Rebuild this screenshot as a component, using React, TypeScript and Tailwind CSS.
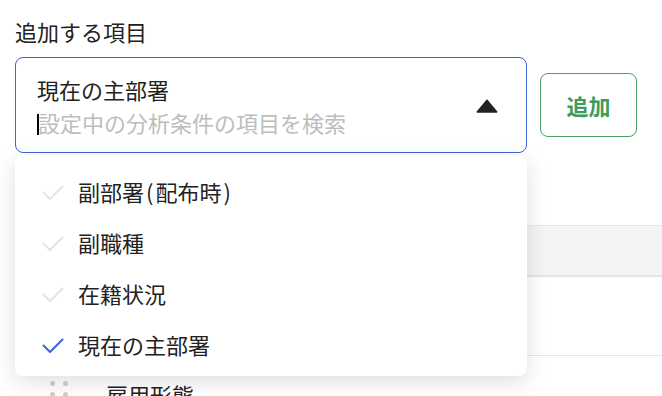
import { useState } from "react"

const options = ["副部署(配布時)", "副職種", "在籍状況", "現在の主部署"]

function CheckIcon({ active }: { active: boolean }) {
    return (
        <svg width="22" height="16" viewBox="0 0 22 16" fill="none" className="shrink-0">
            <polyline
                points="1.5,7.5 8,14 20.5,1.5"
                stroke={active ? "#3b63d6" : "#e3e3e8"}
                strokeWidth="2"
                strokeLinecap="round"
                strokeLinejoin="round"
            />
        </svg>
    )
}

function DragDots() {
    return (
        <div className="grid grid-cols-2 gap-x-[8px] gap-y-[6px] w-[18px] shrink-0">
            {[0, 1, 2, 3, 4, 5].map((i) => (
                <span key={i} className="size-[5px] rounded-full bg-[#cfcfcf]" />
            ))}
        </div>
    )
}

// half-width parens get a bit of room, like the reference font
function Label({ text }: { text: string }) {
    return (
        <span className="text-[22px] leading-[30px]">
            {text.split(/([()])/).map((part, i) =>
                part === "(" || part === ")" ? (
                    <span key={i} className="mx-[2px]">{part}</span>
                ) : (
                    part
                )
            )}
        </span>
    )
}

export default function App() {
    const [selected] = useState<string>("現在の主部署")

    return (
        <div
            className="w-[662px] h-[396px] overflow-hidden bg-white pl-[15px] pt-[16px] text-[#222]"
            style={{ fontFamily: '"Noto Sans CJK JP", "Noto Sans", sans-serif' }}
        >
            <p className="text-[22px] leading-[30px] mb-[11px]">追加する項目</p>

            <div className="flex items-center gap-[13px]">
                <div className="relative w-[512px]">
                    <div className="h-[96px] border border-[#3d63d4] rounded-[8px] flex items-center pl-[21px] pr-[28px]">
                        <div className="flex-1 flex flex-col">
                            <span className="text-[22px] leading-[34px]">{selected}</span>
                            <div className="flex items-center h-[32px]">
                                <span className="w-[2px] h-[21px] bg-black mt-[5px] -mr-[1px]" />
                                <span className="text-[22px] leading-[32px] text-[#bdbdbd]">設定中の分析条件の項目を検索</span>
                            </div>
                        </div>
                        <svg width="22" height="14" viewBox="0 0 22 14" className="mt-[2px]">
                            <path d="M11 1.2 L20.8 13 L1.2 13 Z" fill="#222" stroke="#222" strokeWidth="1.4" strokeLinejoin="round" />
                        </svg>
                    </div>

                    <div className="absolute left-0 right-0 top-[98px] z-10 bg-white rounded-[8px] shadow-[0_6px_22px_rgba(0,0,0,0.13)] pt-[10px] pb-[7px]">
                        {options.map((o) => (
                            <div key={o} className="h-[51px] flex items-center pl-[27px] gap-[14px]">
                                <span className="mt-[4px]">
                                    <CheckIcon active={o === selected} />
                                </span>
                                <Label text={o} />
                            </div>
                        ))}
                    </div>
                </div>

                <button className="w-[97px] h-[64px] border border-[#4a9f66] rounded-[8px] text-[#3f9a5c] text-[22px] font-bold">
                    追加
                </button>
            </div>

            <div className="mt-[72px]">
                <div className="h-[52px] bg-[#f4f4f5] border-t border-[#e6e6e6] border-b-2 border-b-[#e4e4ea]" />
                <div className="h-[79px] border-b border-[#e5e5e5]" />
                <div className="h-[76px] flex items-center pl-[35px] gap-[38px]">
                    <DragDots />
                    <span className="text-[22px] leading-[30px]">雇用形態</span>
                </div>
            </div>
        </div>
    )
}
